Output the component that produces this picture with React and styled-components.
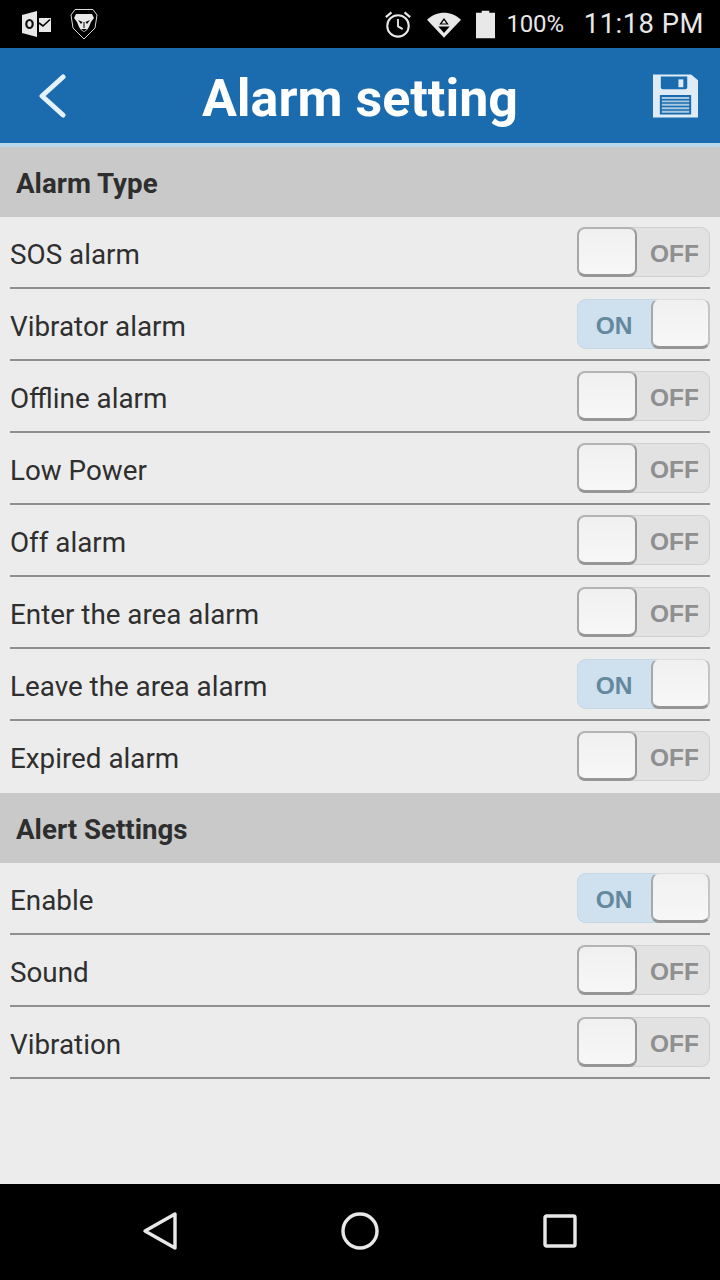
import React from "react";
import styled, { createGlobalStyle } from "styled-components";

const Global = createGlobalStyle`
  html, body { margin: 0; padding: 0; background: #ececec; }
  * { box-sizing: border-box; }
`;

const Page = styled.div`
  width: 720px;
  height: 1280px;
  display: flex;
  flex-direction: column;
  background: #ececec;
  font-family: Roboto, "Liberation Sans", sans-serif;
  overflow: hidden;
`;

const StatusBar = styled.div`
  height: 48px;
  flex: none;
  background: #000;
  display: flex;
  align-items: center;
  color: #e8e8e8;
  padding: 0 16px 0 22px;
`;
const StatusLeft = styled.div`
  display: flex;
  align-items: center;
  gap: 18px;
  flex: 1;
`;
const StatusRight = styled.div`
  display: flex;
  align-items: center;
`;
const StatusIcons = styled.div`
  display: flex;
  align-items: center;
  gap: 15px;
  margin-top: 1px;
`;
const Battery = styled.span`
  font-size: 24px;
  margin-left: 12px;
  letter-spacing: -0.2px;
`;
const Clock = styled.span`
  font-size: 27.4px;
  margin-left: 20px;
  letter-spacing: 0.5px;
`;

const Header = styled.header`
  height: 99px;
  flex: none;
  background: #1b6cae;
  border-bottom: 4px solid #b9d8ec;
  display: flex;
  align-items: center;
  justify-content: space-between;
  padding: 1px 22px 0 38px;
  position: relative;
`;
const Title = styled.h1`
  position: absolute;
  left: 0;
  right: 0;
  top: 21px;
  margin: 0;
  text-align: center;
  color: #fff;
  font-size: 52px;
  line-height: 60px;
  font-weight: 700;
`;

const Section = styled.div`
  flex: none;
  height: 70px;
  background: #c9c9c9;
  display: flex;
  align-items: center;
  padding-left: 16px;
  padding-top: 2px;
  color: #2e2e2e;
  font-size: 27.7px;
  font-weight: 700;
`;

const Row = styled.div`
  flex: none;
  height: 72px;
  margin: 0 10px;
  border-bottom: 2px solid ${(p) => (p.$last ? "transparent" : "#8f8f8f")};
  display: flex;
  align-items: center;
  justify-content: space-between;
  color: #2f2f2f;
  font-size: 27.8px;
  padding-top: 4px;
`;

const Toggle = styled.div`
  width: 133px;
  height: 50px;
  border-radius: 9px;
  background: ${(p) => (p.$on ? "#cfe0ee" : "#e2e2e2")};
  box-shadow: inset 0 0 0 1px ${(p) => (p.$on ? "#c5d6e4" : "#d0d0d0")};
  display: flex;
  flex-direction: ${(p) => (p.$on ? "row-reverse" : "row")};
  align-items: stretch;
  margin-top: -4px;
`;
const Knob = styled.div`
  width: ${(p) => (p.$on ? 59 : 60)}px;
  background: linear-gradient(#f0f0f0, #f7f7f7);
  border: 2px solid #a8a8a8;
  border-top-width: ${(p) => (p.$on ? 1 : 2)}px;
  border-top-color: ${(p) => (p.$on ? "#dcdcdc" : "#b4b4b4")};
  border-right-color: ${(p) => (p.$on ? "#c4c4c4" : "#989898")};
  border-bottom-width: 3px;
  border-bottom-color: #969696;
  border-radius: 8px;
`;
const ToggleLabel = styled.span`
  flex: 1;
  display: flex;
  align-items: center;
  justify-content: center;
  padding-top: 4px;
  padding-left: ${(p) => (p.$on ? 0 : 2)}px;
  font-family: "Liberation Sans", sans-serif;
  font-size: 24.5px;
  font-weight: 700;
  color: ${(p) => (p.$on ? "#64899f" : "#8f8f8f")};
`;

const Spacer = styled.div`
  flex: 1;
`;

const NavBar = styled.nav`
  height: 96px;
  flex: none;
  background: #000;
  display: flex;
  align-items: center;
  justify-content: center;
  padding-bottom: 2px;
`;
const NavSlot = styled.div`
  width: 200px;
  display: flex;
  justify-content: center;
`;

const Toggler = ({ on }) => (
  <Toggle $on={on}>
    <Knob $on={on} />
    <ToggleLabel $on={on}>{on ? "ON" : "OFF"}</ToggleLabel>
  </Toggle>
);

const Setting = ({ label, on, last }) => (
  <Row $last={last}>
    <span>{label}</span>
    <Toggler on={on} />
  </Row>
);

const Outlook = () => (
  <svg width="30" height="26" viewBox="0 0 30 26">
    <path d="M0 4 15 0V26L0 22Z" fill="#e8e8e8" />
    <ellipse cx="7.5" cy="13" rx="3.2" ry="4" fill="none" stroke="#111" strokeWidth="2.2" />
    <path d="M17 7H29V21H17Z" fill="#e8e8e8" />
    <path d="M17 12 21 15 28 8.5" fill="none" stroke="#000" strokeWidth="1.6" />
  </svg>
);

const Lion = () => (
  <svg width="28" height="32" viewBox="0 0 28 32">
    <path d="M5 1.5H23L27 7 25 20 14 31 3 20 1 7Z" fill="#000" stroke="#d8d8d8" strokeWidth="1" />
    <path d="M6 6H22L24 10 21 14 19 19 17 22 14 24 11 22 9 19 7 14 4 10Z" fill="#e8e8e8" />
    <path d="M8 12 12.5 14 11 16ZM20 12 15.5 14 17 16ZM11 21H17L14 23.5Z" fill="#000" />
    <path d="M14 14V20" stroke="#000" strokeWidth="1" />
  </svg>
);

const Alarm = () => (
  <svg width="28" height="29" viewBox="0 0 30 30" fill="none" stroke="#e8e8e8">
    <circle cx="15" cy="16.5" r="11.5" strokeWidth="2.2" />
    <path d="M15 9V17L20 20" strokeWidth="2" />
    <path d="M2 7 8 2M28 7 22 2" strokeWidth="2.4" />
  </svg>
);

const Wifi = () => (
  <svg width="34" height="27" viewBox="0 0 36 28">
    <path d="M0 9C10-1 26-1 36 9L18 28Z" fill="#e8e8e8" />
    <path d="M18 7 13 14H23ZM12 16H24L18 23Z" fill="#000" />
    <path d="M18 9.5 15.5 13H20.5Z" fill="#e8e8e8" />
  </svg>
);

const Batt = () => (
  <svg width="19" height="29" viewBox="0 0 20 29">
    <path d="M6 0H14V2H20V29H0V2H6Z" fill="#e8e8e8" />
  </svg>
);

const Back = () => (
  <svg width="28" height="44" viewBox="0 0 28 44" fill="none">
    <path d="M25 3 4 22 25 41" stroke="#e6f2fa" strokeWidth="5" strokeLinecap="round" strokeLinejoin="round" />
  </svg>
);

const Save = () => (
  <svg width="45" height="44" viewBox="0 0 46 44">
    <path d="M0 0H39L46 6V44H0Z" fill="#dfebf5" />
    <path d="M8 2H35V13Q35 15 33 15H10Q8 15 8 13Z" fill="#1b6cae" />
    <rect x="26" y="5" width="5" height="8" fill="#dfebf5" />
    <path d="M7 21H39V41H7Z" fill="#1b6cae" />
    <path d="M9 24H37M9 27.5H37M9 31H37M9 34.5H37M9 38H37" stroke="#a9c9e2" strokeWidth="2" />
  </svg>
);

const NavBack = () => (
  <svg width="36" height="40" viewBox="0 0 36 40" fill="none">
    <path d="M33 3V37L3 20Z" stroke="#e8e8e8" strokeWidth="3.4" strokeLinejoin="round" />
  </svg>
);
const NavHome = () => (
  <svg width="38" height="38" viewBox="0 0 38 38" fill="none">
    <circle cx="19" cy="19" r="17" stroke="#e8e8e8" strokeWidth="3.4" />
  </svg>
);
const NavRecent = () => (
  <svg width="34" height="34" viewBox="0 0 34 34" fill="none">
    <rect x="2" y="2" width="30" height="30" rx="1.5" stroke="#e8e8e8" strokeWidth="3.4" />
  </svg>
);

const alarms = [
  ["SOS alarm", false],
  ["Vibrator alarm", true],
  ["Offline alarm", false],
  ["Low Power", false],
  ["Off alarm", false],
  ["Enter the area alarm", false],
  ["Leave the area alarm", true],
  ["Expired alarm", false],
];
const alerts = [
  ["Enable", true],
  ["Sound", false],
  ["Vibration", false],
];

export default function App() {
  return (
    <Page>
      <Global />
      <StatusBar>
        <StatusLeft>
          <Outlook />
          <Lion />
        </StatusLeft>
        <StatusRight>
          <StatusIcons>
            <Alarm />
            <Wifi />
            <Batt />
          </StatusIcons>
          <Battery>100%</Battery>
          <Clock>11:18 PM</Clock>
        </StatusRight>
      </StatusBar>
      <Header>
        <Back />
        <Title>Alarm setting</Title>
        <Save />
      </Header>
      <Section>Alarm Type</Section>
      {alarms.map(([l, on], i) => (
        <Setting key={l} label={l} on={on} last={i === alarms.length - 1} />
      ))}
      <Section>Alert Settings</Section>
      {alerts.map(([l, on]) => (
        <Setting key={l} label={l} on={on} />
      ))}
      <Spacer />
      <NavBar>
        <NavSlot><NavBack /></NavSlot>
        <NavSlot><NavHome /></NavSlot>
        <NavSlot><NavRecent /></NavSlot>
      </NavBar>
    </Page>
  );
}
